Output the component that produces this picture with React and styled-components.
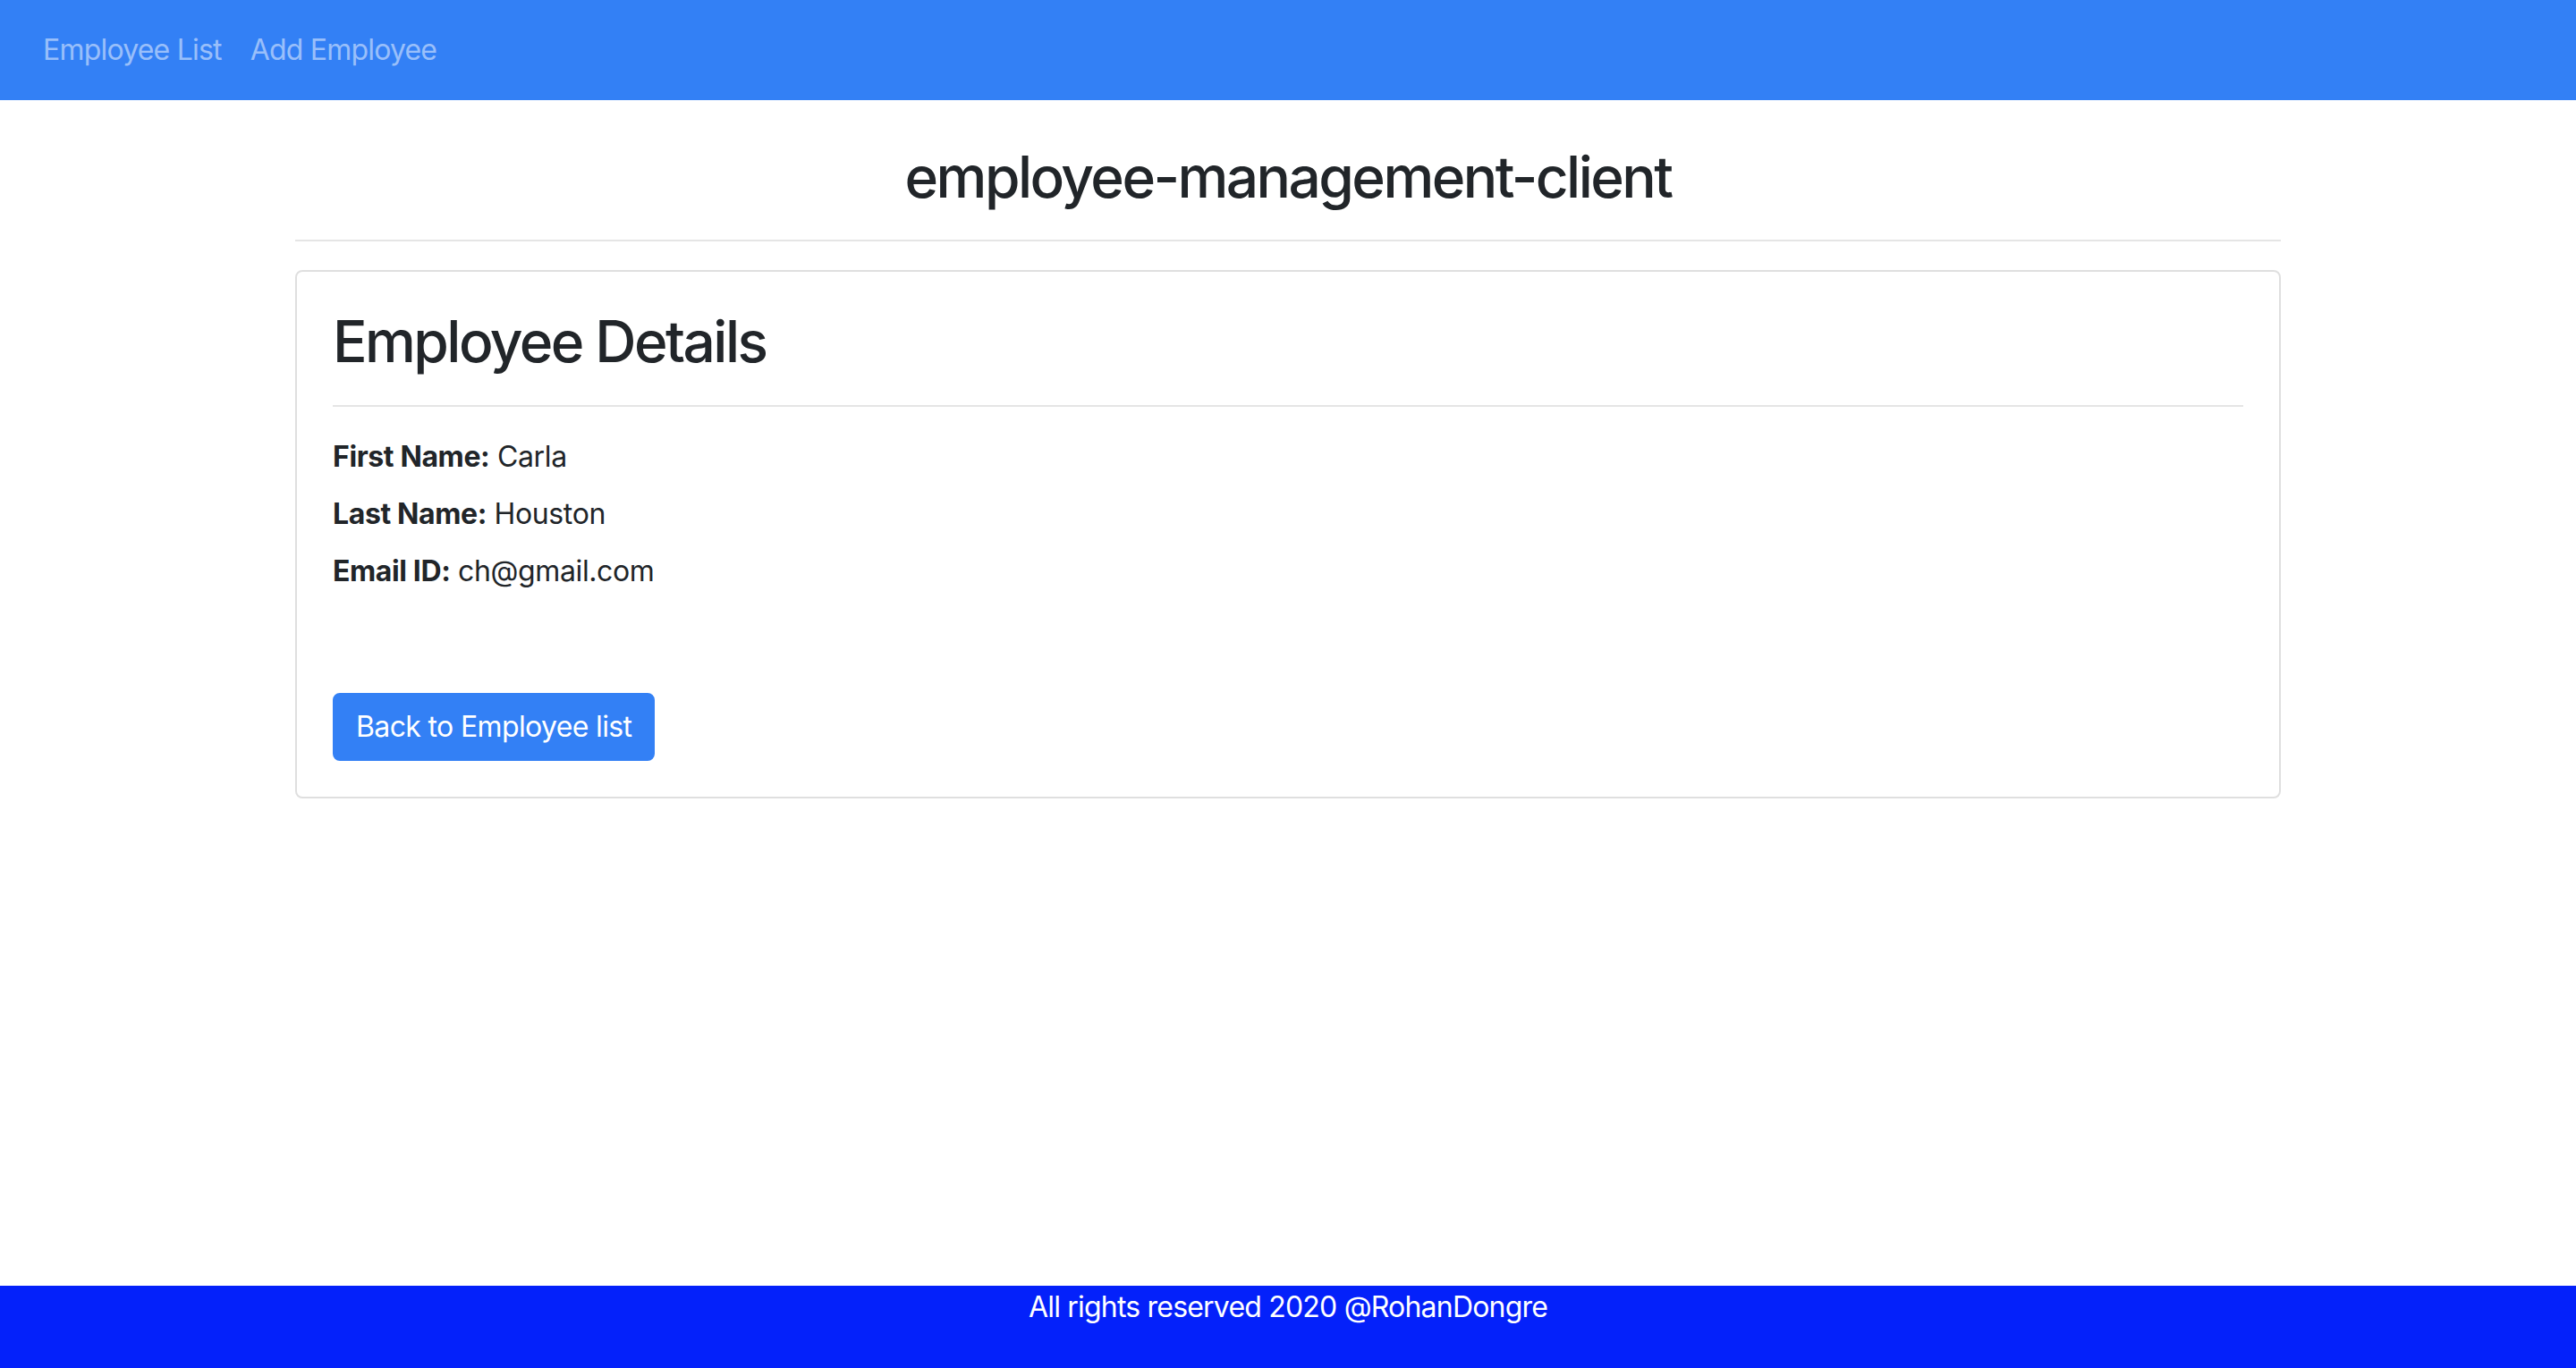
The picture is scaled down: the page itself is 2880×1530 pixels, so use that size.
import React from 'react';
import styled, { createGlobalStyle } from 'styled-components';

const GlobalStyle = createGlobalStyle`
  html, body {
    margin: 0;
    padding: 0;
  }
  body {
    font-family: Inter, "Liberation Sans", sans-serif;
    font-size: 32px;
    line-height: 1.5;
    letter-spacing: -0.025em;
    color: #212529;
    background: #ffffff;
  }
  * {
    box-sizing: border-box;
  }
`;

const Page = styled.div`
  display: flex;
  flex-direction: column;
  min-height: 100vh;
`;

const Navbar = styled.nav`
  display: flex;
  align-items: center;
  height: 112px;
  padding: 16px 32px;
  background-color: #3380f5;
`;

const NavLink = styled.a`
  padding: 16px;
  color: rgba(255, 255, 255, 0.5);
  text-decoration: none;
  cursor: pointer;
`;

const Main = styled.main`
  flex: 1;
`;

const Container = styled.div`
  width: 2280px;
  margin: 0 auto;
  padding: 48px 30px 0;
`;

const Title = styled.h2`
  margin: 0;
  font-size: 64px;
  font-weight: 500;
  line-height: 1.2;
  letter-spacing: -0.04em;
  text-align: center;
`;

const Rule = styled.hr`
  margin: ${(p) => p.$top}px 0 32px;
  border: 0;
  border-top: 2px solid rgba(0, 0, 0, 0.1);
`;

const Card = styled.div`
  border: 2px solid rgba(0, 0, 0, 0.125);
  border-radius: 8px;
  padding: 40px;
`;

const Heading = styled.h2`
  margin: 0;
  font-size: 64px;
  font-weight: 500;
  line-height: 1.2;
  letter-spacing: -0.04em;
`;

const Field = styled.div`
  margin-bottom: 16px;
  line-height: 48px;
  letter-spacing: -0.012em;
  b {
    font-weight: 700;
  }
`;

const Button = styled.button`
  margin-top: 96px;
  height: 76px;
  padding: 12px 24px;
  border: 2px solid #3380f5;
  border-radius: 8px;
  background-color: #3380f5;
  color: #ffffff;
  font-family: inherit;
  font-size: 32px;
  line-height: 48px;
  letter-spacing: -0.02em;
  cursor: pointer;
`;

const Footer = styled.footer`
  height: 92px;
  background-color: #0421fa;
  color: #ffffff;
  text-align: center;
  line-height: 48px;
`;

const employee = {
  firstName: 'Carla',
  lastName: 'Houston',
  emailId: 'ch@gmail.com',
};

export default function App() {
  return (
    <Page>
      <GlobalStyle />
      <Navbar>
        <NavLink>Employee List</NavLink>
        <NavLink>Add Employee</NavLink>
      </Navbar>
      <Main>
        <Container>
          <Title>employee-management-client</Title>
          <Rule $top={31} />
          <Card>
            <Heading>Employee Details</Heading>
            <Rule $top={32} />
            <Field>
              <b>First Name:</b> {employee.firstName}
            </Field>
            <Field>
              <b>Last Name:</b> {employee.lastName}
            </Field>
            <Field>
              <b>Email ID:</b> {employee.emailId}
            </Field>
            <Button>Back to Employee list</Button>
          </Card>
        </Container>
      </Main>
      <Footer>All rights reserved 2020 @RohanDongre</Footer>
    </Page>
  );
}
